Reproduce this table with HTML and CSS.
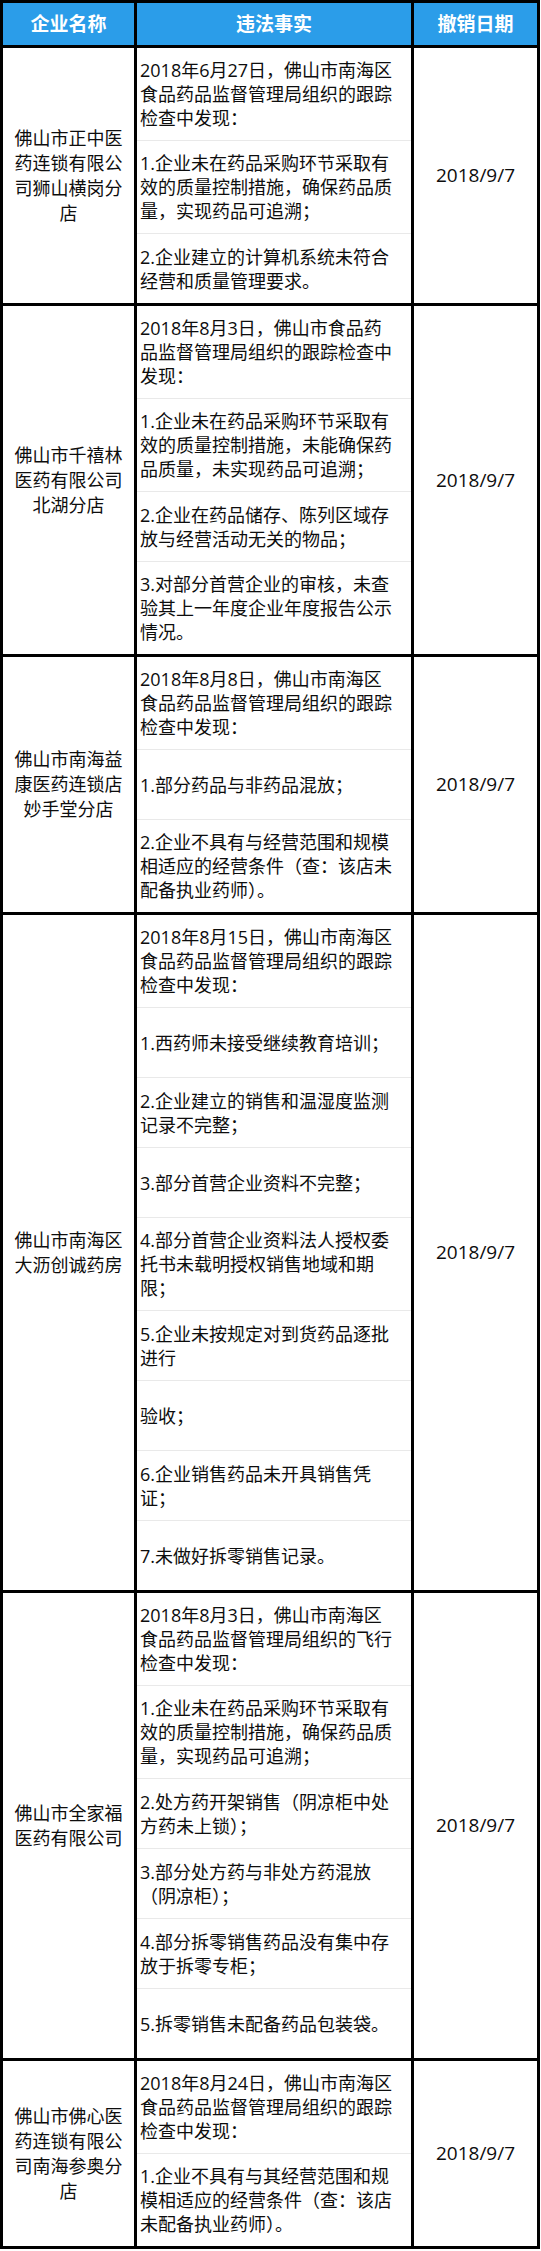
FILE: index.html
```html
<!DOCTYPE html>
<html lang="zh-CN">
<head>
<meta charset="utf-8">
<title>撤销名单</title>
<link rel="stylesheet" href="styles.css">
</head>
<body>
<table class="grid">
  <thead>
    <tr>
      <th class="col-name">企业名称</th>
      <th class="col-fact">违法事实</th>
      <th class="col-date">撤销日期</th>
    </tr>
  </thead>
  <tbody>
    <tr>
      <td class="name">佛山市正中医药连锁有限公司狮山横岗分店</td>
      <td class="facts">
        <div class="fact">2018年6月27日，佛山市南海区<br>食品药品监督管理局组织的跟踪<br>检查中发现：</div>
        <div class="fact">1.企业未在药品采购环节采取有<br>效的质量控制措施，确保药品质<br>量，实现药品可追溯；</div>
        <div class="fact">2.企业建立的计算机系统未符合<br>经营和质量管理要求。</div>
      </td>
      <td class="date">2018/9/7</td>
    </tr>
    <tr>
      <td class="name">佛山市千禧林医药有限公司北湖分店</td>
      <td class="facts">
        <div class="fact">2018年8月3日，佛山市食品药<br>品监督管理局组织的跟踪检查中<br>发现：</div>
        <div class="fact">1.企业未在药品采购环节采取有<br>效的质量控制措施，未能确保药<br>品质量，未实现药品可追溯；</div>
        <div class="fact">2.企业在药品储存、陈列区域存<br>放与经营活动无关的物品；</div>
        <div class="fact">3.对部分首营企业的审核，未查<br>验其上一年度企业年度报告公示<br>情况。</div>
      </td>
      <td class="date">2018/9/7</td>
    </tr>
    <tr>
      <td class="name">佛山市南海益康医药连锁店妙手堂分店</td>
      <td class="facts">
        <div class="fact">2018年8月8日，佛山市南海区<br>食品药品监督管理局组织的跟踪<br>检查中发现：</div>
        <div class="fact">1.部分药品与非药品混放；</div>
        <div class="fact">2.企业不具有与经营范围和规模<br>相适应的经营条件（查：该店未<br>配备执业药师）。</div>
      </td>
      <td class="date">2018/9/7</td>
    </tr>
    <tr>
      <td class="name">佛山市南海区大沥创诚药房</td>
      <td class="facts">
        <div class="fact">2018年8月15日，佛山市南海区<br>食品药品监督管理局组织的跟踪<br>检查中发现：</div>
        <div class="fact">1.西药师未接受继续教育培训；</div>
        <div class="fact">2.企业建立的销售和温湿度监测<br>记录不完整；</div>
        <div class="fact">3.部分首营企业资料不完整；</div>
        <div class="fact">4.部分首营企业资料法人授权委<br>托书未载明授权销售地域和期<br>限；</div>
        <div class="fact">5.企业未按规定对到货药品逐批<br>进行</div>
        <div class="fact">验收；</div>
        <div class="fact">6.企业销售药品未开具销售凭<br>证；</div>
        <div class="fact">7.未做好拆零销售记录。</div>
      </td>
      <td class="date">2018/9/7</td>
    </tr>
    <tr>
      <td class="name">佛山市全家福医药有限公司</td>
      <td class="facts">
        <div class="fact">2018年8月3日，佛山市南海区<br>食品药品监督管理局组织的飞行<br>检查中发现：</div>
        <div class="fact">1.企业未在药品采购环节采取有<br>效的质量控制措施，确保药品质<br>量，实现药品可追溯；</div>
        <div class="fact">2.处方药开架销售（阴凉柜中处<br>方药未上锁）；</div>
        <div class="fact">3.部分处方药与非处方药混放<br>（阴凉柜）；</div>
        <div class="fact">4.部分拆零销售药品没有集中存<br>放于拆零专柜；</div>
        <div class="fact">5.拆零销售未配备药品包装袋。</div>
      </td>
      <td class="date">2018/9/7</td>
    </tr>
    <tr>
      <td class="name">佛山市佛心医药连锁有限公司南海参奥分店</td>
      <td class="facts">
        <div class="fact">2018年8月24日，佛山市南海区<br>食品药品监督管理局组织的跟踪<br>检查中发现：</div>
        <div class="fact">1.企业不具有与其经营范围和规<br>模相适应的经营条件（查：该店<br>未配备执业药师）。</div>
      </td>
      <td class="date">2018/9/7</td>
    </tr>
  </tbody>
</table>
</body>
</html>
```

FILE: styles.css
```css
html, body {
  margin: 0;
  padding: 0;
  background: #ffffff;
}

body {
  font-family: "Open Sans", "Noto Sans CJK SC", sans-serif;
  color: #0d0d0d;
}

.grid {
  border-collapse: separate;
  border-spacing: 0;
  table-layout: fixed;
  width: 540px;
  border-top: 3px solid #000;
  border-left: 3px solid #000;
}

.grid th,
.grid td {
  box-sizing: border-box;
  border-right: 3px solid #000;
  border-bottom: 3px solid #000;
  padding: 0;
  font-size: 18px;
}

.grid th {
  background: #2b9de9;
  color: #ffffff;
  font-weight: 700;
  font-size: 19px;
  height: 45px;
  line-height: 42px;
  text-align: center;
}

.grid .col-name { width: 134px; }
.grid .col-fact { width: 277px; }
.grid .col-date { width: 126px; }

.grid .name {
  text-align: center;
  vertical-align: middle;
  padding: 0 8px;
  line-height: 25px;
}

.grid .facts {
  vertical-align: top;
}

.fact {
  box-sizing: border-box;
  min-height: 70px;
  padding: 10px 4px 10px 3px;
  line-height: 24px;
  border-bottom: 1px solid #e9e9e9;
  display: flex;
  flex-direction: column;
  justify-content: center;
}

.fact:last-child {
  border-bottom: 0;
  min-height: 69px;
}

.grid .date {
  text-align: center;
  vertical-align: middle;
  line-height: 25px;
  font-size: 19px;
}
```
